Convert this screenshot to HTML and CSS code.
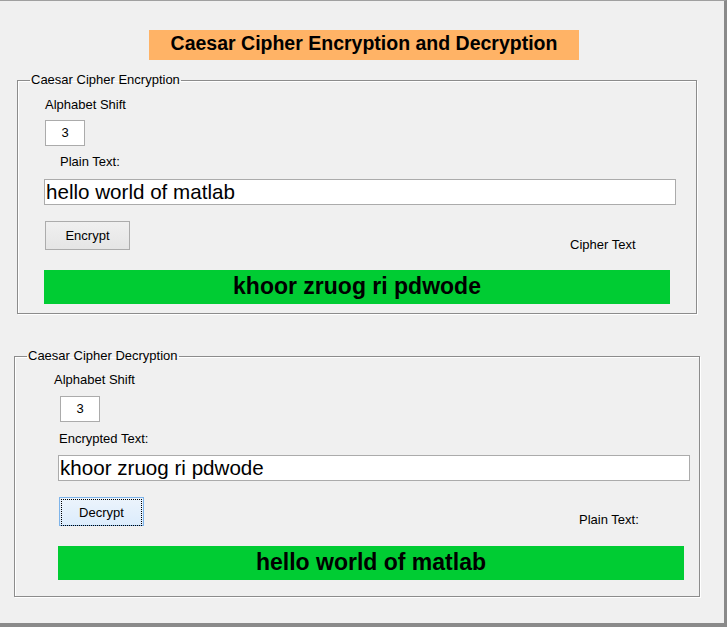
FILE: index.html
```html
<!DOCTYPE html>
<html>
<head>
<meta charset="utf-8">
<link rel="stylesheet" href="styles.css">
</head>
<body>
<div class="window">
  <div class="title">Caesar Cipher Encryption and Decryption</div>

  <fieldset class="panel panel-enc">
    <legend>Caesar Cipher Encryption</legend>
    <div class="label shift-label">Alphabet Shift</div>
    <div class="num">3</div>
    <div class="label text-label">Plain Text:</div>
    <div class="edit">hello world of matlab</div>
    <div class="row">
      <div class="btn">Encrypt</div>
      <div class="label out-label">Cipher Text</div>
    </div>
    <div class="result">khoor zruog ri pdwode</div>
  </fieldset>

  <fieldset class="panel panel-dec">
    <legend>Caesar Cipher Decryption</legend>
    <div class="label shift-label">Alphabet Shift</div>
    <div class="num">3</div>
    <div class="label text-label">Encrypted Text:</div>
    <div class="edit">khoor zruog ri pdwode</div>
    <div class="row">
      <div class="btn btn-focus"><span>Decrypt</span></div>
      <div class="label out-label">Plain Text:</div>
    </div>
    <div class="result">hello world of matlab</div>
  </fieldset>
</div>
</body>
</html>
```
FILE: styles.css
```css
html, body {
  margin: 0;
  padding: 0;
  background: #f0f0f0;
}
.window {
  width: 724px;
  height: 622px;
  border-top: 1px solid #a0a0a0;
  border-right: 3px solid #8a8a8a;
  border-bottom: 4px solid #8a8a8a;
  background: #f0f0f0;
  font-family: "Liberation Sans", Arial, sans-serif;
  color: #000;
  overflow: hidden;
}
.title {
  margin: 29px 0 0 149px;
  width: 430px;
  height: 30px;
  background: #ffb366;
  font-weight: bold;
  font-size: 19.5px;
  line-height: 27px;
  text-align: center;
  white-space: nowrap;
}
.panel {
  margin: 13px 0 0 17px;
  padding: 0;
  min-width: 0;
  width: 680px;
  border: 1px solid #8c8c8c;
  box-shadow: 1px 1px 0 #fff, inset 1px 1px 0 #fff;
  box-sizing: border-box;
}
.panel legend {
  margin-left: 12px;
  padding: 0 1px;
  font-size: 13px;
  line-height: 14px;
  height: 14px;
}
.panel-enc { height: 241px; }
.panel-dec {
  margin: 35px 0 0 14px;
  width: 686px;
  height: 248px;
}
.label {
  font-size: 13px;
  line-height: 15px;
  height: 15px;
  white-space: nowrap;
}
.num {
  width: 40px;
  height: 26px;
  box-sizing: border-box;
  background: #fff;
  border: 1px solid #ababab;
  font-size: 13px;
  line-height: 24px;
  text-align: center;
}
.edit {
  height: 26px;
  box-sizing: border-box;
  background: #fff;
  border: 1px solid #ababab;
  font-size: 20.6px;
  line-height: 23px;
  padding-left: 1px;
  white-space: nowrap;
}
.row {
  display: flex;
  align-items: flex-start;
  height: 29px;
}
.btn {
  width: 85px;
  height: 29px;
  box-sizing: border-box;
  border: 1px solid #acacac;
  background: linear-gradient(#f0f0f0, #e5e5e5);
  font-size: 13px;
  line-height: 27px;
  text-align: center;
}
.btn-focus {
  border-color: #7eb4ea;
  background: linear-gradient(#ecf4fc, #dcecfc);
  padding: 1px;
}
.btn-focus span {
  display: block;
  height: 25px;
  line-height: 25px;
  border: 1px dotted #000;
}
.result {
  width: 626px;
  height: 34px;
  background: #00cc33;
  font-weight: bold;
  font-size: 23px;
  line-height: 32px;
  text-align: center;
  white-space: nowrap;
}

/* encryption panel positions (content origin x=18) */
.panel-enc .shift-label { margin: 10px 0 0 27px; }
.panel-enc .num { margin: 8px 0 0 27px; }
.panel-enc .text-label { margin: 8px 0 0 42px; }
.panel-enc .edit { margin: 10px 0 0 26px; width: 632px; }
.panel-enc .row { margin: 16px 0 0 27px; }
.panel-enc .out-label { margin: 16px 0 0 440px; }
.panel-enc .result { margin: 20px 0 0 26px; }

/* decryption panel positions (content origin x=15) */
.panel-dec .shift-label { margin: 9px 0 0 39px; }
.panel-dec .num { margin: 9px 0 0 45px; }
.panel-dec .text-label { margin: 9px 0 0 44px; }
.panel-dec .edit { margin: 9px 0 0 43px; width: 632px; }
.panel-dec .row { margin: 16px 0 0 44px; }
.panel-dec .out-label { margin: 15px 0 0 435px; }
.panel-dec .result { margin: 20px 0 0 43px; }
```
